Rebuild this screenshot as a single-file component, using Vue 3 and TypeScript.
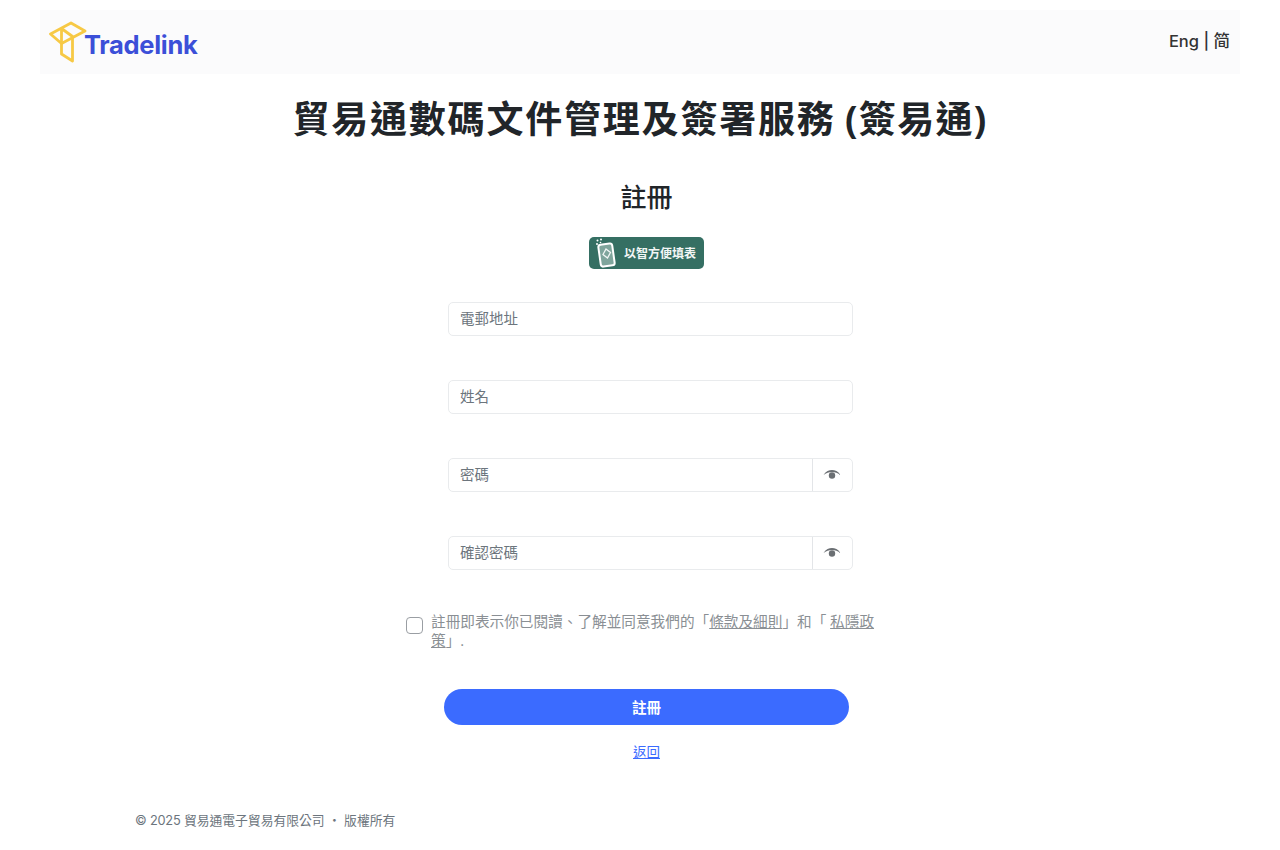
<template>
  <div class="page">
    <header class="topbar">
      <a class="logo" href="#">
        <svg class="logo__mark" width="38" height="42" viewBox="0 0 38 42" fill="none" stroke="#f7c945" stroke-width="2.800" stroke-linejoin="round">
          <path d="M1.500 13 L22 2 L36 10 L12.500 22.500 Z" />
          <path d="M12.500 7.500 L12.500 22.500 L12.500 33 L23.500 40 L23.500 15.500 L12.500 7.500" />
        </svg>
        <span class="logo__text">Tradelink</span>
      </a>
      <div class="lang">Eng | 简</div>
    </header>

    <h1 class="title">貿易通數碼文件管理及簽署服務 <span class="title__paren">(簽易通)</span></h1>

    <main class="form-wrap">
      <h2 class="subtitle">註冊</h2>
      <button class="mobile-btn" type="button">
        <svg width="22" height="30" viewBox="0 0 22 30" fill="none">
          <rect x="4.500" y="6" width="14" height="22" rx="2.500" transform="rotate(-8 12 17)" fill="#7fa59c" stroke="#fff" stroke-width="2" />
          <path d="M11 11 L15.500 14.500 L12.500 20 L8 16.500 Z" stroke="#f2f6f5" stroke-width="1.300" />
          <circle cx="2.500" cy="2.500" r="1" fill="#fff" />
          <circle cx="6" cy="1.500" r="1" fill="#fff" />
          <circle cx="2" cy="6" r="1" fill="#fff" />
          <circle cx="5.500" cy="4.500" r="0.800" fill="#fff" />
        </svg>
        <span>以智方便填表</span>
      </button>

      <form class="fields" @submit.prevent>
        <div v-for="field in fields" :key="field.label" class="field">
          <input class="field__input" :type="field.secret ? 'password' : 'text'" :placeholder="field.label" />
          <span v-if="field.secret" class="field__eye">
            <svg width="18" height="12" viewBox="0 0 18 12">
              <path d="M0.500 6 C3 2.200 6 1 9 1 C12 1 15 2.200 17.500 6 C15 4 12 3 9 3 C6 3 3 4 0.500 6 Z" fill="#6b6f73" />
              <circle cx="9" cy="6.500" r="3.200" fill="#6b6f73" />
            </svg>
          </span>
        </div>
      </form>

      <label class="agree">
        <input class="agree__box" type="checkbox" />
        <span class="agree__text">註冊即表示你已閱讀、了解並同意我們的「<a href="#">條款及細則</a>」和「 <a href="#">私隱政策</a>」.</span>
      </label>

      <button class="submit" type="button">註冊</button>
      <a class="back" href="#">返回</a>
    </main>

    <footer class="footer"><span class="footer__year">© 2025</span> 貿易通電子貿易有限公司 ・ 版權所有</footer>
  </div>
</template>

<script setup lang="ts">
interface Field {
  label: string
  secret: boolean
}

const fields: Field[] = [
  { label: '電郵地址', secret: false },
  { label: '姓名', secret: false },
  { label: '密碼', secret: true },
  { label: '確認密碼', secret: true }
]
</script>

<style scoped>
.page {
  width: 1280px;
  height: 850px;
  box-sizing: border-box;
  padding-top: 10px;
  overflow: hidden;
  background: #fff;
  font-family: "Open Sans", "Noto Sans CJK TC", sans-serif;
}

.topbar {
  width: 1200px;
  height: 64px;
  margin: 0 auto;
  padding: 0 10px 0 9px;
  box-sizing: border-box;
  display: flex;
  align-items: center;
  justify-content: space-between;
  background: #fbfbfc;
}

.logo {
  display: flex;
  align-items: center;
  text-decoration: none;
}

.logo__text {
  margin-left: -3px;
  margin-top: 4px;
  font-family: Inter, "Liberation Sans", sans-serif;
  font-size: 25.500px;
  font-weight: 700;
  letter-spacing: -0.300px;
  color: #3b4fd8;
}

.lang {
  margin-top: -4px;
  font-family: Inter, "Noto Sans CJK SC", sans-serif;
  font-size: 16.500px;
  font-weight: 500;
  color: #333;
}

.title {
  margin: 21px 0 0;
  text-align: center;
  font-size: 37px;
  line-height: 47px;
  font-weight: 700;
  letter-spacing: 1.800px;
  word-spacing: -2px;
  color: #212529;
}

.title__paren {
  letter-spacing: 1.300px;
}

.form-wrap {
  display: flex;
  flex-direction: column;
  align-items: center;
}

.subtitle {
  margin: 39px 0 0 13px;
  font-size: 26px;
  line-height: 32px;
  font-weight: 500;
  color: #212529;
}

.mobile-btn {
  margin: 24px 0 0 13px;
  width: 115px;
  height: 32px;
  padding: 0 0 0 6px;
  display: flex;
  align-items: center;
  gap: 7px;
  border: none;
  border-radius: 5px;
  background: #356f63;
  color: #f2f6f5;
  font-family: inherit;
  font-size: 12px;
  font-weight: 600;
}

.fields {
  margin: 33px 0 0 20px;
  display: flex;
  flex-direction: column;
  gap: 44px;
}

.field {
  width: 405px;
  height: 34px;
  box-sizing: border-box;
  display: flex;
  border: 1.500px solid #e9ebed;
  border-radius: 5px;
  background: #fff;
}

.field__input {
  flex: 1;
  min-width: 0;
  padding: 0 11.500px 1px;
  border: none;
  outline: none;
  background: transparent;
  font-family: inherit;
  font-size: 14.500px;
}

.field__input::placeholder {
  color: #6c757d;
  opacity: 1;
}

.field__eye {
  width: 39px;
  display: flex;
  align-items: center;
  justify-content: center;
  border-left: 1px solid #e3e5e8;
}

.agree {
  width: 470px;
  margin: 44px 0 0 2px;
  display: flex;
  align-items: flex-start;
  gap: 8px;
  font-size: 14.650px;
  line-height: 19px;
  color: #8a8f94;
}

.agree__text {
  margin-top: -2px;
}

.agree a {
  color: #8a8f94;
}

.agree__box {
  appearance: none;
  flex: none;
  width: 17px;
  height: 17px;
  margin: 3px 0 0;
  border: 1.500px solid #9a9ea3;
  border-radius: 4px;
  background: #fff;
}

.submit {
  margin: 39px 0 0 13px;
  width: 405px;
  height: 36px;
  padding: 0 0 2px;
  border: none;
  border-radius: 18px;
  background: #3b6bff;
  color: #fff;
  font-family: inherit;
  font-size: 14.500px;
  font-weight: 600;
}

.back {
  margin: 18px 0 0 13px;
  font-size: 13.500px;
  line-height: 18px;
  color: #3b6bff;
}

.footer {
  margin: 50px 0 0 135px;
  font-family: "Open Sans", "Noto Sans CJK TC", sans-serif;
  font-size: 12.800px;
  line-height: 18px;
  color: #6c757d;
}

.footer__year {
  font-family: Inter, sans-serif;
  letter-spacing: -0.200px;
}
</style>
